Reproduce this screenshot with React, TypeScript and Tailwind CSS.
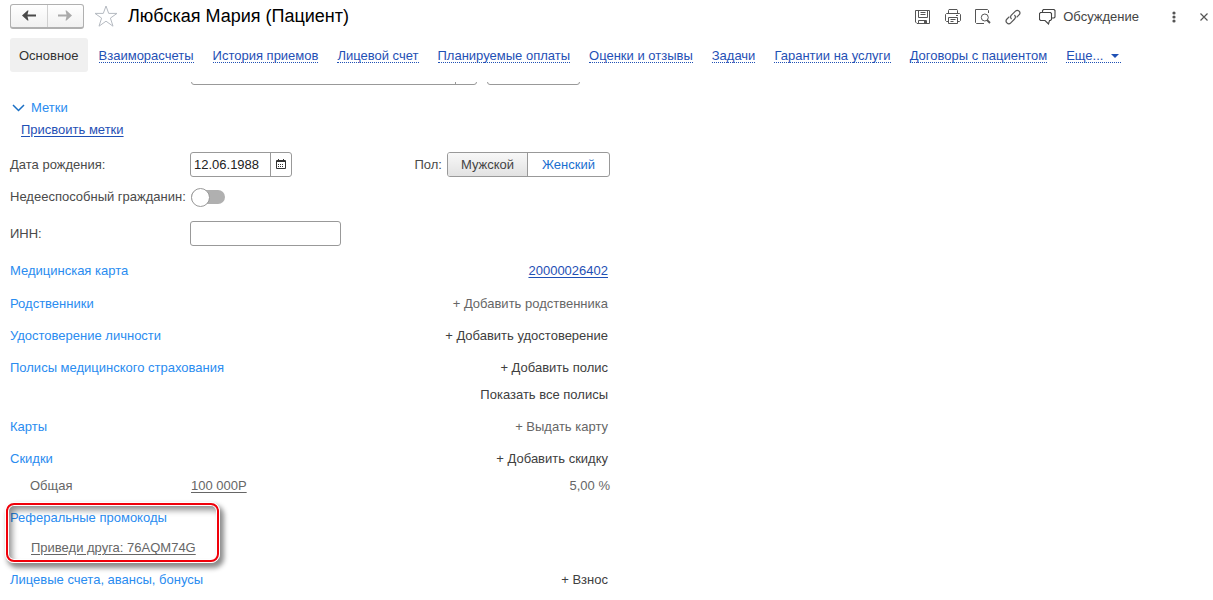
import { useState, type ReactNode } from "react";

const tabs = [
  "Взаиморасчеты",
  "История приемов",
  "Лицевой счет",
  "Планируемые оплаты",
  "Оценки и отзывы",
  "Задачи",
  "Гарантии на услуги",
  "Договоры с пациентом",
];

function IconButton({ label, children }: { label: string; children: ReactNode }) {
  return (
    <button type="button" aria-label={label} className="flex size-4 items-center justify-center text-[#555]">
      {children}
    </button>
  );
}

function Glyph({ children }: { children: ReactNode }) {
  return (
    <svg viewBox="0 0 16 16" className="size-4 shrink-0" fill="none" stroke="currentColor" strokeWidth="1">
      {children}
    </svg>
  );
}

function Header() {
  return (
    <header className="flex h-8 items-center pl-2.5 pr-px">
      <div className="flex h-[25px] w-[74px] overflow-hidden rounded-[3px] border border-b-2 border-[#b0b0b0] bg-linear-to-b from-white to-[#f1f1f1]">
        <button type="button" aria-label="Назад" className="flex flex-1 items-center justify-center border-r border-[#d0d0d0] text-[#4a4a4a]">
          <svg viewBox="0 0 14 11" className="h-[11px] w-3.5" fill="currentColor">
            <path d="M0 5.5 5.5 0.5H6.5L5.5 4.4H14V6.6H5.5L6.5 10.5H5.5Z" />
          </svg>
        </button>
        <button type="button" aria-label="Вперед" className="flex flex-1 items-center justify-center text-[#aaa]">
          <svg viewBox="0 0 14 11" className="h-[11px] w-3.5" fill="currentColor">
            <path d="M14 5.5 8.5 0.5H7.5L8.5 4.4H0V6.6H8.5L7.5 10.5H8.5Z" />
          </svg>
        </button>
      </div>
      <button type="button" aria-label="В избранное" className="ml-2.5 text-[#b5bac1]">
        <svg viewBox="0 0 24 22" className="h-[22px] w-6" fill="none" stroke="currentColor" strokeWidth="1">
          <path d="M12 1 14.7 8.4H23L16.4 13.1 19 21.2 12 16.2 5 21.2 7.6 13.1 1 8.4H9.3Z" />
        </svg>
      </button>
      <h1 className="ml-2.5 text-[18px] leading-6 text-black">Любская Мария (Пациент)</h1>
      <div className="ml-auto flex items-center gap-3.5 pt-px">
        <IconButton label="Сохранить">
          <Glyph>
            <path d="M.5 1.5H14.5V14.5H2L.5 13ZM3.5 1.5V8.5H12.5V1.5M5.5 3.5H10.5M5.5 5.5H10.5M3.5 14.5V11.5H11.5V14.5" />
            <path d="M9 12H11V14H9Z" fill="currentColor" stroke="none" />
          </Glyph>
        </IconButton>
        <IconButton label="Печать">
          <Glyph>
            <path d="M3.5 4.5V1.5L4 .5H12L12.5 1.5V4.5M3.5 12.5H1.5L.5 11.5V5.5L1.5 4.5H14.5L15.5 5.5V11.5L14.5 12.5H12.5M3.5 8.5H12.5V14.5H3.5ZM5.5 10.5H10.5M5.5 12.5H8.5M11 6.5H13" />
          </Glyph>
        </IconButton>
        <IconButton label="Просмотр">
          <Glyph>
            <path d="M9 14.5H1.5L.5 13.5V.5H12.5L13.5 1.5V4" />
            <circle cx="9.8" cy="8.5" r="3.5" />
            <path d="M12 11 15 14" strokeWidth="1.8" />
          </Glyph>
        </IconButton>
        <IconButton label="Получить ссылку">
          <Glyph>
            <path d="M6.6 10.2C5.2 8.8 5.3 7.2 6.4 6.1L10.2 2.3C11.4 1.1 13 1.1 14.1 2.2 15.2 3.3 15.1 4.8 14 5.9L11.6 8.3M9.4 6C10.8 7.3 10.7 8.9 9.6 10L5.8 13.8C4.6 15 3 14.9 1.9 13.8.8 12.7.9 11.1 2 10L4.4 7.6" strokeWidth="1.2" />
          </Glyph>
        </IconButton>
        <button type="button" className="ml-1 flex items-center gap-[7px] text-[13px] text-[#444]">
          <svg viewBox="0 0 17 16" className="h-4 w-[17px]" fill="none" stroke="currentColor" strokeWidth="1.1">
            <path d="M1.5 3.5H11.5L12.5 4.5V10.5L11.5 11.5H10.5L9.5 15 6 11.5H1.5L.5 10.5V4.5ZM3.5 3.5V1.5L4.5.5H15L16 1.5V8L15 9H12.5" />
          </svg>
          Обсуждение
        </button>
        <button type="button" aria-label="Меню" className="ml-[13px] flex size-4 items-center justify-center text-[#555]">
          <svg viewBox="0 0 4 12" className="h-3 w-1" fill="currentColor">
            <circle cx="2" cy="2" r="1.6" />
            <circle cx="2" cy="6" r="1.6" />
            <circle cx="2" cy="10" r="1.6" />
          </svg>
        </button>
        <IconButton label="Закрыть">
          <Glyph>
            <path d="M4.5 4.5 11.5 11.5M11.5 4.5 4.5 11.5" strokeWidth="1.2" />
          </Glyph>
        </IconButton>
      </div>
    </header>
  );
}

function Tabs() {
  return (
    <nav className="flex items-center gap-[19px] pl-2.5 pt-1.5 whitespace-nowrap text-[#1f50b5]">
      <a href="#main" aria-current="page" className="-mr-2 flex h-[34px] items-center rounded-[3px] bg-[#f0f0f0] px-[9px] pt-px text-[#333]">
        Основное
      </a>
      {tabs.map((tab) => (
        <a key={tab} href="#tab" className="mt-0.5 border-b border-dotted border-[#1f50b5] leading-[13px]">
          {tab}
        </a>
      ))}
      <button type="button" className="mt-0.5 flex items-center gap-2 border-b border-dotted border-[#1f50b5] pr-0.5 leading-[13px]">
        Еще...
        <svg viewBox="0 0 8 4" className="h-1 w-2" fill="currentColor">
          <path d="M0 0H8L4 4Z" />
        </svg>
      </button>
    </nav>
  );
}

function Row({ title, action, muted = false }: { title?: string; action?: string; muted?: boolean }) {
  return (
    <div className="flex h-5 items-center justify-between pr-0.5">
      {title ? <h2 className="text-[#2a8cf0]">{title}</h2> : <span />}
      {action && (
        <button type="button" className={muted ? "text-[#666]" : "text-[#404040]"}>
          {action}
        </button>
      )}
    </div>
  );
}

export default function App() {
  const [date, setDate] = useState("12.06.1988");
  const [sex, setSex] = useState("Мужской");

  return (
    <div className="bg-white font-['Liberation_Sans',Arial,sans-serif] text-[13px] leading-5 text-[#4a4a4a]">
      <Header />
      <Tabs />
      <main className="mt-2.5 max-w-[610px] pl-2.5">
        <div className="flex h-[3px] items-end gap-2.5 overflow-hidden pl-[181px] pr-[30px]">
          <div className="flex h-6 flex-1 rounded-[3px] border border-[#999]">
            <span className="flex-1 border-r border-[#999]" />
            <span className="w-5" />
          </div>
          <div className="h-6 w-[93px] rounded-[3px] border border-[#999]" />
        </div>

        <button type="button" className="mt-[13px] ml-0.5 flex h-5 items-center gap-1.5 text-[#2a8cf0]">
          <svg viewBox="0 0 13 8" className="h-2 w-[13px]" fill="none" stroke="#1a6fc4" strokeWidth="1.5">
            <path d="M1 1 6.5 6.5 12 1" />
          </svg>
          Метки
        </button>
        <a href="#labels" className="ml-[11px] mt-0.5 block w-fit text-[#1f50b5] underline underline-offset-2">
          Присвоить метки
        </a>

        <div className="mt-3 flex h-[25px] items-center">
          <label htmlFor="birth" className="w-[180px]">Дата рождения:</label>
          <div className="flex h-full w-[102px] rounded-[3px] border border-[#999]">
            <input
              id="birth"
              value={date}
              onChange={(e) => setDate(e.target.value)}
              className="w-20 border-r border-[#999] pl-[3px] text-[#222] outline-none"
            />
            <button type="button" aria-label="Выбрать дату" className="flex flex-1 items-center justify-center pb-0.5 text-[#333]">
              <svg viewBox="0 0 10 10" className="size-2.5" fill="none" stroke="currentColor">
                <path d="M.5 1.5H9.5V9.5H.5ZM2.5 0V2M7.5 0V2M0 2.5H10" />
                <path d="M2 5.5H8M2 7.5H8" strokeDasharray="1 1" />
              </svg>
            </button>
          </div>
          <div role="radiogroup" aria-labelledby="sex-label" className="relative ml-auto flex h-full items-center">
            <span id="sex-label" className="mr-[5px]">Пол:</span>
            <div className="flex h-full w-[163px] overflow-hidden rounded-[3px] border border-[#999]">
              {["Мужской", "Женский"].map((option) => (
                <label
                  key={option}
                  className="flex flex-1 items-center justify-center text-[#1a6fd0] first:flex-none first:w-20 first:border-r first:border-[#999] has-checked:bg-linear-to-b has-checked:from-[#f8f8f8] has-checked:to-[#e2e2e2] has-checked:text-[#444]"
                >
                  <input
                    type="radio"
                    name="sex"
                    className="sr-only"
                    checked={sex === option}
                    onChange={() => setSex(option)}
                  />
                  {option}
                </label>
              ))}
            </div>
          </div>
        </div>

        <label className="relative mt-2.5 flex h-5 items-center">
          <span className="w-[181px]">Недееспособный гражданин:</span>
          <input type="checkbox" role="switch" className="peer sr-only" />
          <span className="flex h-3.5 w-[34px] items-center rounded-full bg-[#b0b0b0] peer-checked:justify-end">
            <span className="size-[19px] shrink-0 rounded-full border border-[#999] bg-white" />
          </span>
        </label>

        <div className="mt-3.5 flex h-[25px] items-center">
          <label htmlFor="inn" className="w-[180px]">ИНН:</label>
          <input id="inn" className="h-full w-[151px] rounded-[3px] border border-[#999] px-1 outline-none" />
        </div>

        <div className="mt-[15px] flex h-5 items-center justify-between pr-0.5">
          <h2 className="text-[#2a8cf0]">Медицинская карта</h2>
          <a href="#card" className="text-[#1f50b5] underline underline-offset-2">20000026402</a>
        </div>

        <div className="mt-[13px] flex flex-col gap-3">
          <Row title="Родственники" action="+ Добавить родственника" muted />
          <Row title="Удостоверение личности" action="+ Добавить удостоверение" />
          <div className="flex flex-col gap-[7px]">
            <Row title="Полисы медицинского страхования" action="+ Добавить полис" />
            <Row action="Показать все полисы" />
          </div>
          <Row title="Карты" action="+ Выдать карту" muted />
          <div className="flex flex-col gap-[7px]">
            <Row title="Скидки" action="+ Добавить скидку" />
            <div className="flex h-5 items-center pl-5 text-[#666]">
              <span className="w-[161px]">Общая</span>
              <a href="#discount" className="underline underline-offset-2">100 000Р</a>
              <span className="ml-auto">5,00 %</span>
            </div>
          </div>
          <section className="relative flex flex-col gap-2.5">
            <Row title="Реферальные промокоды" />
            <a href="#promo" className="ml-[21px] w-fit text-[#666] underline underline-offset-2">
              Приведи друга: 76AQM74G
            </a>
            <div className="pointer-events-none absolute -left-[5px] -top-1.5 h-[61px] w-[215px] rounded-[9px] border border-white shadow-[3px_4px_5px_1px_rgba(0,0,0,0.45)]">
              <div className="size-full rounded-lg border-2 border-[#f0000a] shadow-[inset_0_0_0_1px_white,inset_4px_5px_6px_rgba(0,0,0,0.45)]" />
            </div>
          </section>
          <Row title="Лицевые счета, авансы, бонусы" action="+ Взнос" />
        </div>
      </main>
    </div>
  );
}
